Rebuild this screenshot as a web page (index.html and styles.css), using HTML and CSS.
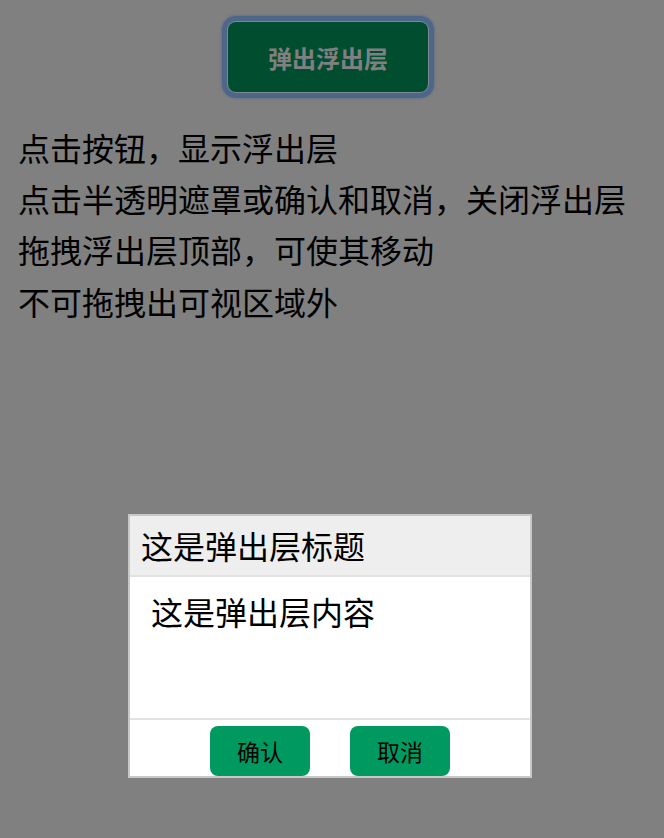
FILE: index.html
```html
<!DOCTYPE html>
<html lang="zh">
<head>
<meta charset="utf-8">
<title>浮出层</title>
<link rel="stylesheet" href="styles.css">
</head>
<body>
<div class="page">
  <div class="top">
    <button class="open-btn">弹出浮出层</button>
  </div>
  <div class="notes">
    <p>点击按钮，显示浮出层</p>
    <p>点击半透明遮罩或确认和取消，关闭浮出层</p>
    <p>拖拽浮出层顶部，可使其移动</p>
    <p>不可拖拽出可视区域外</p>
  </div>
</div>
<div class="dialog">
  <div class="dialog-title">这是弹出层标题</div>
  <div class="dialog-body">这是弹出层内容</div>
  <div class="dialog-foot">
    <button class="btn">确认</button>
    <button class="btn">取消</button>
  </div>
</div>
</body>
</html>
```

FILE: styles.css
```css
html, body {
  margin: 0;
  padding: 0;
  background: #808080;
  font-family: "Noto Sans CJK SC", "Noto Sans", sans-serif;
  color: #000;
}
.page {
  width: 664px;
  height: 838px;
}
.top {
  display: flex;
  justify-content: center;
  padding-top: 22px;
  padding-right: 8px;
}
.open-btn {
  width: 200px;
  height: 70px;
  border: none;
  border-radius: 8px;
  background: #004d30;
  color: #808080;
  font-family: "Noto Sans CJK SC", sans-serif;
  font-size: 24px;
  font-weight: bold;
  box-shadow: 0 0 0 1px #7e8893, 0 0 0 6px #4d6689, 0 0 2px 7px rgba(77,102,137,0.5);
  padding: 0;
}
.notes {
  padding: 30px 0 0 18px;
}
.notes p {
  margin: 0;
  font-size: 32px;
  line-height: 51.2px;
  white-space: nowrap;
}
.dialog {
  position: absolute;
  left: 128px;
  top: 514px;
  width: 404px;
  height: 264px;
  box-sizing: border-box;
  border: 2px solid #c8c8c8;
  background: #fff;
  display: flex;
  flex-direction: column;
}
.dialog-title {
  height: 61px;
  box-sizing: border-box;
  background: #eeeeee;
  border-bottom: 2px solid #e2e2e2;
  font-size: 32px;
  line-height: 59px;
  padding-left: 11px;
  white-space: nowrap;
}
.dialog-body {
  flex: 1;
  font-size: 32px;
  line-height: 46px;
  padding: 11px 0 0 21px;
  border-bottom: 2px solid #e2e2e2;
}
.dialog-foot {
  height: 56px;
  box-sizing: border-box;
  padding-top: 6px;
  display: flex;
  justify-content: center;
  gap: 40px;
}
.btn {
  width: 100px;
  height: 50px;
  border: none;
  border-radius: 8px;
  background: #009a61;
  color: #000;
  font-family: "Noto Sans CJK SC", sans-serif;
  font-size: 23px;
  padding: 0;
}
```
